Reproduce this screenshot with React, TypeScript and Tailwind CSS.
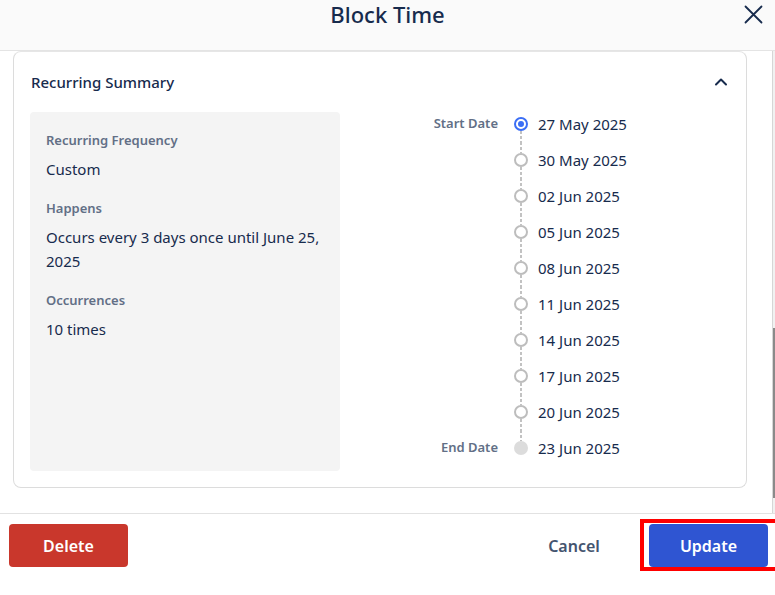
import React from 'react';

const DATES = [
  '27 May 2025',
  '30 May 2025',
  '02 Jun 2025',
  '05 Jun 2025',
  '08 Jun 2025',
  '11 Jun 2025',
  '14 Jun 2025',
  '17 Jun 2025',
  '20 Jun 2025',
  '23 Jun 2025',
];

const dash = 'w-[2px] flex-1 bg-[repeating-linear-gradient(to_bottom,#c2c2c2_0_3px,transparent_3px_5px)]';

function Dot({ kind }: { kind: 'start' | 'mid' | 'end' }) {
  if (kind === 'start') {
    return (
      <div className="w-[14px] h-[14px] shrink-0 rounded-full border-2 border-[#3b6ef5] flex items-center justify-center bg-white">
        <div className="w-[6px] h-[6px] rounded-full bg-[#3b6ef5]" />
      </div>
    );
  }
  if (kind === 'end') {
    return <div className="w-[14px] h-[14px] shrink-0 rounded-full bg-[#dcdcdc]" />;
  }
  return <div className="w-[14px] h-[14px] shrink-0 rounded-full border-2 border-[#bdbdbd] bg-white" />;
}

export default function App() {
  return (
    <div className="w-[775px] h-[595px] bg-white overflow-hidden flex flex-col font-['Noto_Sans',sans-serif] text-[#172b4d]">
      {/* Header */}
      <div className="h-[51px] shrink-0 bg-[#fafafa] border-b border-[#e4e4e4] relative flex items-start justify-center">
        <h1 className="text-[22px] leading-[30px] font-medium text-[#172b4d] -mt-[1px]">Block Time</h1>
        <button className="absolute right-[11px] top-[4px] w-[21px] h-[21px] flex items-center justify-center">
          <svg width="19" height="19" viewBox="0 0 19 19" fill="none">
            <path d="M1.5 1.5 L17.5 17.5 M17.5 1.5 L1.5 17.5" stroke="#172b4d" strokeWidth="1.8" strokeLinecap="round" />
          </svg>
        </button>
      </div>

      {/* Body */}
      <div className="h-[462px] shrink-0 flex">
        <div className="flex-1 pl-[13px] pr-[25px]">
          <div className="h-[437px] border border-[#dcdcdc] border-t-[#e6e6e6] rounded-lg px-4 pt-[19px] pb-4 flex flex-col">
            <div className="flex items-center justify-between h-[22px]">
              <span className="text-[15px] font-medium text-[#172b4d] pl-px">Recurring Summary</span>
              <svg width="14" height="10" viewBox="0 0 14 10" fill="none" className="mr-[2px]">
                <path d="M2 7.5 L7 2.5 L12 7.5" stroke="#172b4d" strokeWidth="2" strokeLinecap="round" strokeLinejoin="round" />
              </svg>
            </div>

            <div className="flex items-start mt-[19px] flex-1">
              {/* Summary box */}
              <div className="w-[310px] h-[359px] bg-[#f4f4f4] rounded pl-4 pr-2 pt-[18px]">
                <p className="text-[13px] leading-[20px] font-semibold text-[#626f86]">Recurring Frequency</p>
                <p className="text-[15px] leading-[24px] mt-[7px]">Custom</p>
                <p className="text-[13px] leading-[20px] font-semibold text-[#626f86] mt-[17px]">Happens</p>
                <p className="text-[15px] leading-[24px] mt-[7px]">Occurs every 3 days once until June 25, 2025</p>
                <p className="text-[13px] leading-[20px] font-semibold text-[#626f86] mt-[17px]">Occurrences</p>
                <p className="text-[15px] leading-[24px] mt-[7px]">10 times</p>
              </div>

              {/* Timeline */}
              <div className="flex-1 -mt-[6px] flex flex-col">
                {DATES.map((d, i) => {
                  const first = i === 0;
                  const last = i === DATES.length - 1;
                  return (
                    <div key={d} className="h-9 flex items-center">
                      <div className="w-[158px] text-right text-[13px] font-semibold text-[#626f86]">
                        {first ? 'Start Date' : last ? 'End Date' : ''}
                      </div>
                      <div className="w-[14px] h-9 ml-4 flex flex-col items-center">
                        <div className={first ? 'flex-1' : dash} />
                        <Dot kind={first ? 'start' : last ? 'end' : 'mid'} />
                        <div className={last ? 'flex-1' : dash} />
                      </div>
                      <div className="ml-[10px] text-[15px] text-[#172b4d]">{d}</div>
                    </div>
                  );
                })}
              </div>
            </div>
          </div>
        </div>
        {/* scrollbar */}
        <div className="w-[3px] border-l border-[#d6d6d6] bg-[#f1f1f1] flex flex-col">
          <div className="h-[277px]" />
          <div className="h-[170px] bg-[#8a8a8a]" />
        </div>
      </div>

      {/* Footer */}
      <div className="flex-1 border-t border-[#e2e2e2] pl-[9px] pr-[7px] pt-[10px] flex items-start">
        <button className="w-[119px] h-[43px] rounded bg-[#c9372c] text-white text-[16px] font-semibold">Delete</button>
        <div className="flex-1" />
        <button className="w-[120px] h-[43px] text-[16px] font-semibold text-[#44546f] mr-[15px]">Cancel</button>
        <div className="relative">
          <button className="w-[119px] h-[43px] rounded bg-[#2f55d2] text-white text-[16px] font-semibold">Update</button>
          <div className="absolute -left-[9px] -top-[5px] -bottom-[4px] -right-[12px] border-4 border-[#ff0000]" />
        </div>
      </div>
    </div>
  );
}
